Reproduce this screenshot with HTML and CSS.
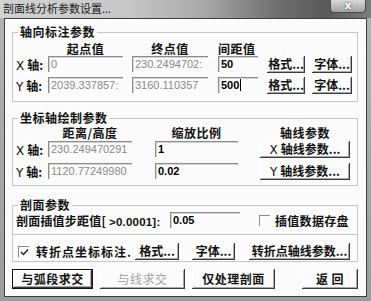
FILE: index.html
```html
<!DOCTYPE html>
<html>
    <head>
        <meta charset="utf-8">
        <title>剖面线分析参数设置</title>
        <link rel="stylesheet" href="styles.css">
    </head>
    <body>
        <div class="janela">
            <div class="titulo">
                <span class="titulo-texto">剖面线分析参数设置...</span>
                <div class="fechar">x</div>
            </div>
            <div class="cliente">
                <fieldset class="grupo g1">
                    <legend>轴向标注参数</legend>
                    <div class="linha cab">
                        <span class="rot"></span>
                        <span class="w75 c">起点值</span>
                        <span class="w76 c ml9">终点值</span>
                        <span class="w40 ml10">间距值</span>
                    </div>
                    <div class="linha">
                        <span class="rot"><i>X</i>轴:</span>
                        <div class="campo w75 off">0</div>
                        <div class="campo w76 ml9 off">230.2494702:</div>
                        <div class="campo w40 ml10 on">50</div>
                        <div class="botao w38 ml9">格式...</div>
                        <div class="botao w40 ml7">字体...</div>
                    </div>
                    <div class="linha l2">
                        <span class="rot"><i>Y</i>轴:</span>
                        <div class="campo w75 off">2039.337857:</div>
                        <div class="campo w76 ml9 off">3160.110357</div>
                        <div class="campo w40 ml10 on">500<span class="cursor"></span></div>
                        <div class="botao w38 ml9">格式...</div>
                        <div class="botao w40 ml7">字体...</div>
                    </div>
                </fieldset>

                <fieldset class="grupo g2">
                    <legend>坐标轴绘制参数</legend>
                    <div class="linha cab">
                        <span class="rot"></span>
                        <span class="w84 c">距离/高度</span>
                        <span class="w83 c ml23">缩放比例</span>
                        <span class="w90 c ml22">轴线参数</span>
                    </div>
                    <div class="linha">
                        <span class="rot"><i>X</i>轴:</span>
                        <div class="campo w84 off">230.249470291</div>
                        <div class="campo w83 ml23 on">1</div>
                        <div class="botao w90 ml22"><i>X</i>轴线参数...</div>
                    </div>
                    <div class="linha l2b">
                        <span class="rot"><i>Y</i>轴:</span>
                        <div class="campo w84 off">1120.77249980</div>
                        <div class="campo w83 ml23 on">0.02</div>
                        <div class="botao w90 ml22"><i>Y</i>轴线参数...</div>
                    </div>
                </fieldset>

                <fieldset class="grupo g3">
                    <legend>剖面参数</legend>
                    <div class="linha">
                        <span class="passo">剖面插值步距值[ <b>&gt;0.0001]:</b></span>
                        <div class="campo w70 on">0.05</div>
                        <span class="caixa ml19"></span>
                        <span class="marca">插值数据存盘</span>
                    </div>
                    <div class="divisor"></div>
                    <div class="linha l3">
                        <span class="caixa"><svg width="9" height="9" viewBox="0 0 9 9"><path d="M1 4 L3.5 6.5 L8 1.5" fill="none" stroke="#222" stroke-width="1.4"/></svg></span>
                        <span class="marca mk2">转折点坐标标注.</span>
                        <div class="botao w44">格式...</div>
                        <div class="botao w43 ml13">字体...</div>
                        <div class="botao w101 ml14">转折点轴线参数...</div>
                    </div>
                </fieldset>

                <div class="rodape">
                    <div class="botao grande padrao w81">与弧段求交</div>
                    <div class="botao grande inativo w85 ml7">与线求交</div>
                    <div class="botao grande w83 ml7">仅处理剖面</div>
                    <div class="botao grande w56 ml27">返 回</div>
                </div>
            </div>
        </div>
    </body>
</html>
```

FILE: styles.css
```css
*{
    box-sizing: border-box;
}
body{
    margin: 0;
    background: #fff;
    font-family: "Noto Sans CJK SC", sans-serif;
    font-size: 12px;
    color: #111;
}
.janela{
    width: 371px;
    height: 301px;
    background: linear-gradient(to bottom, #b4b4b4, #9c9c9c);
    padding: 0 4px 4px 4px;
    display: flex;
    flex-direction: column;
}
.titulo{
    height: 18px;
    display: flex;
    align-items: flex-start;
    margin: 0 -4px;
    padding-left: 3px;
    background: linear-gradient(to right, #d2d2d2 0, #c6c6c6 35%, #a8a8a8 55%, #6e6e6e 75%, #5a5a5a 88%, #7c7c7c 100%);
}
.titulo-texto{
    font-size: 11px;
    line-height: 17px;
    color: #1a1a1a;
}
.fechar{
    margin-left: auto;
    margin-right: 5px;
    width: 36px;
    height: 13px;
    border: 1px solid #4a4a4a;
    border-top: none;
    border-radius: 0 0 4px 4px;
    background: linear-gradient(to bottom, #d8d8d8, #a2a2a2);
    color: #fff;
    font-family: "DejaVu Sans", sans-serif;
    font-weight: bold;
    font-size: 11px;
    line-height: 11px;
    text-align: center;
    text-shadow: 0 0 2px #333;
}
.cliente{
    flex: 1;
    background: #fbfbfb;
    border: 1px solid #3e3e3e;
    padding: 0 7px 0 7px;
}
.grupo{
    margin: 0;
    width: 346px;
    border: 1px solid #c6c6c6;
    padding: 0 3px;
}
.grupo legend{
    font-weight: bold;
    line-height: 12px;
    padding: 0 2px;
    margin-left: 2px;
    letter-spacing: 0.5px;
}
.g1{
    margin-top: 7px;
    padding-bottom: 8px;
}
.g2{
    margin-top: 10px;
    padding-bottom: 6px;
}
.g3{
    margin-top: 13px;
    padding-bottom: 0;
}
.linha{
    display: flex;
    align-items: center;
    height: 16px;
    margin-top: 1px;
    white-space: nowrap;
}
.cab{
    height: 14px;
    margin-top: 3px;
    font-weight: bold;
    letter-spacing: 0.5px;
}
.g2 .cab{
    margin-top: 2px;
    height: 13px;
}
.g2 .cab + .linha{
    margin-top: 2px;
}
.l2{
    margin-top: 5px;
}
.l2b{
    margin-top: 6px;
}
.rot{
    width: 32px;
    flex: none;
    font-weight: bold;
}
.rot i, .botao i{
    font-style: normal;
    font-weight: normal;
    font-family: "DejaVu Sans", sans-serif;
    font-size: 12px;
    margin-right: 3px;
}
.c{
    text-align: center;
}
.campo{
    height: 16px;
    flex: none;
    border-top: 1px solid #8c8c8c;
    border-left: 1px solid #8c8c8c;
    box-shadow: inset 1px 1px #d4d4d4;
    font-family: "Liberation Sans", sans-serif;
    font-size: 11px;
    line-height: 15px;
    padding-left: 2px;
    overflow: hidden;
    white-space: nowrap;
}
.off{
    color: #8a8a8a;
}
.on{
    color: #000;
    font-weight: bold;
}
.cursor{
    display: inline-block;
    width: 1px;
    height: 12px;
    background: #000;
    vertical-align: -2px;
    margin-left: 1px;
}
.botao{
    flex: none;
    height: 17px;
    font-weight: bold;
    text-align: center;
    line-height: 16px;
    box-shadow: inset -1px -1px #3a3a3a, inset 1px 1px #fff, inset -2px -2px #a8a8a8;
    white-space: nowrap;
}
.passo{
    width: 154px;
    flex: none;
    font-weight: bold;
    letter-spacing: 0.2px;
}
.passo b{
    font-family: "Liberation Sans", sans-serif;
    font-size: 11.5px;
}
.caixa{
    width: 11px;
    height: 11px;
    flex: none;
    border-top: 1px solid #8c8c8c;
    border-left: 1px solid #8c8c8c;
    display: flex;
    align-items: center;
    justify-content: center;
}
.g3 .l3 .caixa{
    margin-left: 2px;
}
.marca{
    flex: none;
    font-weight: bold;
    margin-left: 5px;
    letter-spacing: 0.3px;
}
.mk2{
    width: 99px;
    margin-left: 7px;
    letter-spacing: 1px;
}
.divisor{
    border-top: 1px solid #c6c6c6;
    margin: 6px -3px 0 -3px;
}
.l3{
    height: 17px;
    margin-top: 8px;
    margin-bottom: 1px;
}
.rodape{
    display: flex;
    margin-top: 7px;
    margin-left: 0;
}
.grande{
    height: 20px;
    line-height: 19px;
    letter-spacing: 0.5px;
}
.padrao{
    border: 1px solid #111;
    line-height: 17px;
}
.inativo{
    color: #a4a4a4;
    font-weight: normal;
}
.w38{ width: 38px; }
.w40{ width: 40px; }
.w43{ width: 43px; }
.w44{ width: 44px; }
.w56{ width: 56px; }
.w70{ width: 70px; }
.w75{ width: 75px; }
.w76{ width: 76px; }
.w81{ width: 81px; }
.w83{ width: 83px; }
.w84{ width: 84px; }
.w85{ width: 85px; }
.w90{ width: 90px; }
.w101{ width: 101px; }
.ml7{ margin-left: 7px; }
.ml9{ margin-left: 9px; }
.ml10{ margin-left: 10px; }
.ml13{ margin-left: 13px; }
.ml14{ margin-left: 14px; }
.ml19{ margin-left: 19px; }
.ml22{ margin-left: 22px; }
.ml23{ margin-left: 23px; }
.ml27{ margin-left: 27px; }
```
